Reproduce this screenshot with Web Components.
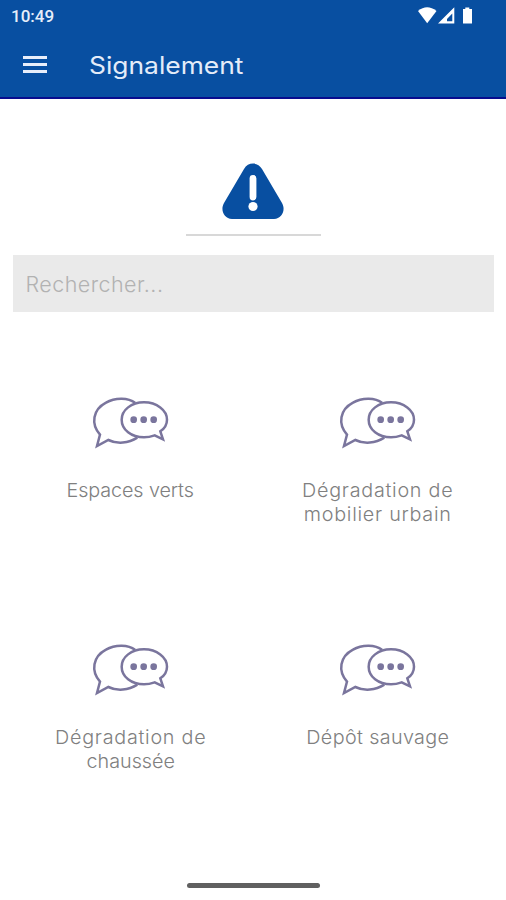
<!DOCTYPE html>
<html lang="fr">
<head>
<meta charset="utf-8">
<title>Signalement</title>
<style>
    body {
        margin: 0;
        background: #fff;
        font-family: Inter, "Open Sans", sans-serif;
    }
    /* tracking of single label lines */
    .tight { letter-spacing: -0.1px; }
    .wide { letter-spacing: 0.7px; }
    .normal { letter-spacing: 0; }
</style>
</head>
<body>
<app-screen>
    <status-bar slot="top" time="10:49"></status-bar>
    <title-bar slot="top">Signalement</title-bar>
    <alert-banner></alert-banner>
    <search-field placeholder="Rechercher..."></search-field>
    <category-grid>
        <category-tile><span class="tight">Espaces verts</span></category-tile>
        <category-tile><span class="wide">Dégradation de<br>mobilier urbain</span></category-tile>
        <category-tile><span class="wide">Dégradation de</span><br><span class="normal">chaussée</span></category-tile>
        <category-tile>Dépôt sauvage</category-tile>
    </category-grid>
</app-screen>
<script>
class BaseElement extends HTMLElement {
    constructor() {
        super();
        const template = document.createElement('template');
        template.innerHTML = this.constructor.HTML;
        this.attachShadow({ mode: 'open' }).appendChild(template.content.cloneNode(true));
    }
    query(s) {
        return this.shadowRoot.querySelector(s);
    }
}

class AppScreen extends BaseElement {
    static HTML = `
    <style>
        :host {
            display: flex;
            flex-direction: column;
            height: 900px;
            overflow: hidden;
        }
        header {
            box-sizing: border-box;
            height: 99px;
            background: #084fa1;
            border-bottom: 2px solid #080c8e;
        }
        main { flex: 1; }
        footer {
            display: flex;
            justify-content: center;
            height: 17px;
        }
        /* gesture handle */
        footer div {
            width: 133px;
            height: 5px;
            margin-left: 1px;
            border-radius: 3px;
            background: #606060;
        }
    </style>
    <header><slot name="top"></slot></header>
    <main><slot></slot></main>
    <footer><div></div></footer>`;
}
customElements.define('app-screen', AppScreen);

class StatusBar extends BaseElement {
    static HTML = `
    <style>
        :host {
            display: flex;
            align-items: center;
            justify-content: space-between;
            height: 32px;
            padding: 0 31px 0 11px;
            color: #e6eefa;
            font: 500 17px/32px Roboto, sans-serif;
        }
        svg { display: block; }
    </style>
    <span></span>
    <svg width="58" height="20" viewBox="0 0 58 20" fill="#fff">
        <path d="M1 5Q10 -2.500 19.500 5L10.200 17.300Z"/>
        <path fill-rule="evenodd" d="M37.300 1.200V17.500H21ZM35.300 7.500L30 13V15.300H35.300Z"/>
        <path d="M48.300 3V1.500H52.300V3H55V17.500H46V3Z"/>
    </svg>`;
    connectedCallback() {
        this.query('span').textContent = this.getAttribute('time');
    }
}
customElements.define('status-bar', StatusBar);

class TitleBar extends BaseElement {
    static HTML = `
    <style>
        :host {
            display: flex;
            align-items: center;
            gap: 42px;
            height: 66px;
            padding-left: 23px;
            color: #e4ecf9;
            font-size: 24px;
            font-weight: 400;
        }
        svg { display: block; }
        span {
            transform: scaleX(1.1);
            transform-origin: left;
        }
    </style>
    <svg width="24" height="18" viewBox="0 0 24 18" fill="#e8eefa">
        <path d="M0 0h24v3H0zM0 7h24v3H0zM0 14h24v3H0z"/>
    </svg>
    <span><slot></slot></span>`;
}
customElements.define('title-bar', TitleBar);

class AlertBanner extends BaseElement {
    static HTML = `
    <style>
        :host {
            display: flex;
            flex-direction: column;
            align-items: center;
            padding-top: 64px;
        }
        svg { display: block; }
        hr {
            width: 135px;
            height: 2px;
            margin: 14px 0 0 1px;
            border: 0;
            background: #d8d8d8;
        }
    </style>
    <svg width="62" height="57" viewBox="0 0 62 57">
        <path fill="#084fa1" d="M22 6C26 -1.200 36 -1.200 40 6L60 40C64 47 60 56 52 56H10C2 56 -2 47 2 40Z"/>
        <path stroke="#fff" stroke-width="6.800" stroke-linecap="round" d="M31 15.500V34"/>
        <circle cx="31" cy="43.500" r="4.600" fill="#fff"/>
    </svg>
    <hr>`;
}
customElements.define('alert-banner', AlertBanner);

class SearchField extends BaseElement {
    static HTML = `
    <style>
        :host {
            display: block;
            margin: 19px 12px 0 12.500px;
        }
        input {
            display: block;
            box-sizing: border-box;
            width: 100%;
            height: 57px;
            padding: 0 13px;
            border: 0;
            border-radius: 0;
            background: #eaeaea;
            font: 300 21.500px Inter, "Open Sans", sans-serif;
            letter-spacing: 0.45px;
        }
        input::placeholder { color: #b2b2b2; opacity: 1; }
    </style>
    <input type="text">`;
    connectedCallback() {
        this.query('input').placeholder = this.getAttribute('placeholder');
    }
}
customElements.define('search-field', SearchField);

class CategoryGrid extends BaseElement {
    static HTML = `
    <style>
        :host {
            display: grid;
            grid-template-columns: 247px 247px;
            grid-auto-rows: 247px;
            justify-content: center;
            margin-top: 73px;
        }
    </style>
    <slot></slot>`;
}
customElements.define('category-grid', CategoryGrid);

class CategoryTile extends BaseElement {
    static HTML = `
    <style>
        :host {
            display: flex;
            flex-direction: column;
            align-items: center;
            color: #808080;
            font-size: 19px;
            font-weight: 300;
            line-height: 24px;
            letter-spacing: 0.35px;
            text-align: center;
        }
        svg { display: block; }
        div {
            margin: 19px 0 0 2px;
            transform: scaleX(1.04);
        }
    </style>
    <svg width="100" height="75" viewBox="0 0 300 225" fill="none" stroke="#7a759d" stroke-width="7.500">
        <path d="M165 53C146 38 106 36 78 53C38 74 32 117 60 149L51 183L85 165C112 178 145 175 172 158"/>
        <path d="M241 139L249 163L224 151C210 156 201 157 192 157C154 157 125 134 125 104C125 75 154 52 192 52C230 52 261 75 261 104C261 118 254 130 241 139Z"/>
        <g fill="#7a759d" stroke="none">
            <circle cx="161" cy="104" r="10"/>
            <circle cx="191" cy="104" r="10"/>
            <circle cx="221" cy="104" r="10"/>
        </g>
    </svg>
    <div><slot></slot></div>`;
}
customElements.define('category-tile', CategoryTile);
</script>
</body>
</html>
